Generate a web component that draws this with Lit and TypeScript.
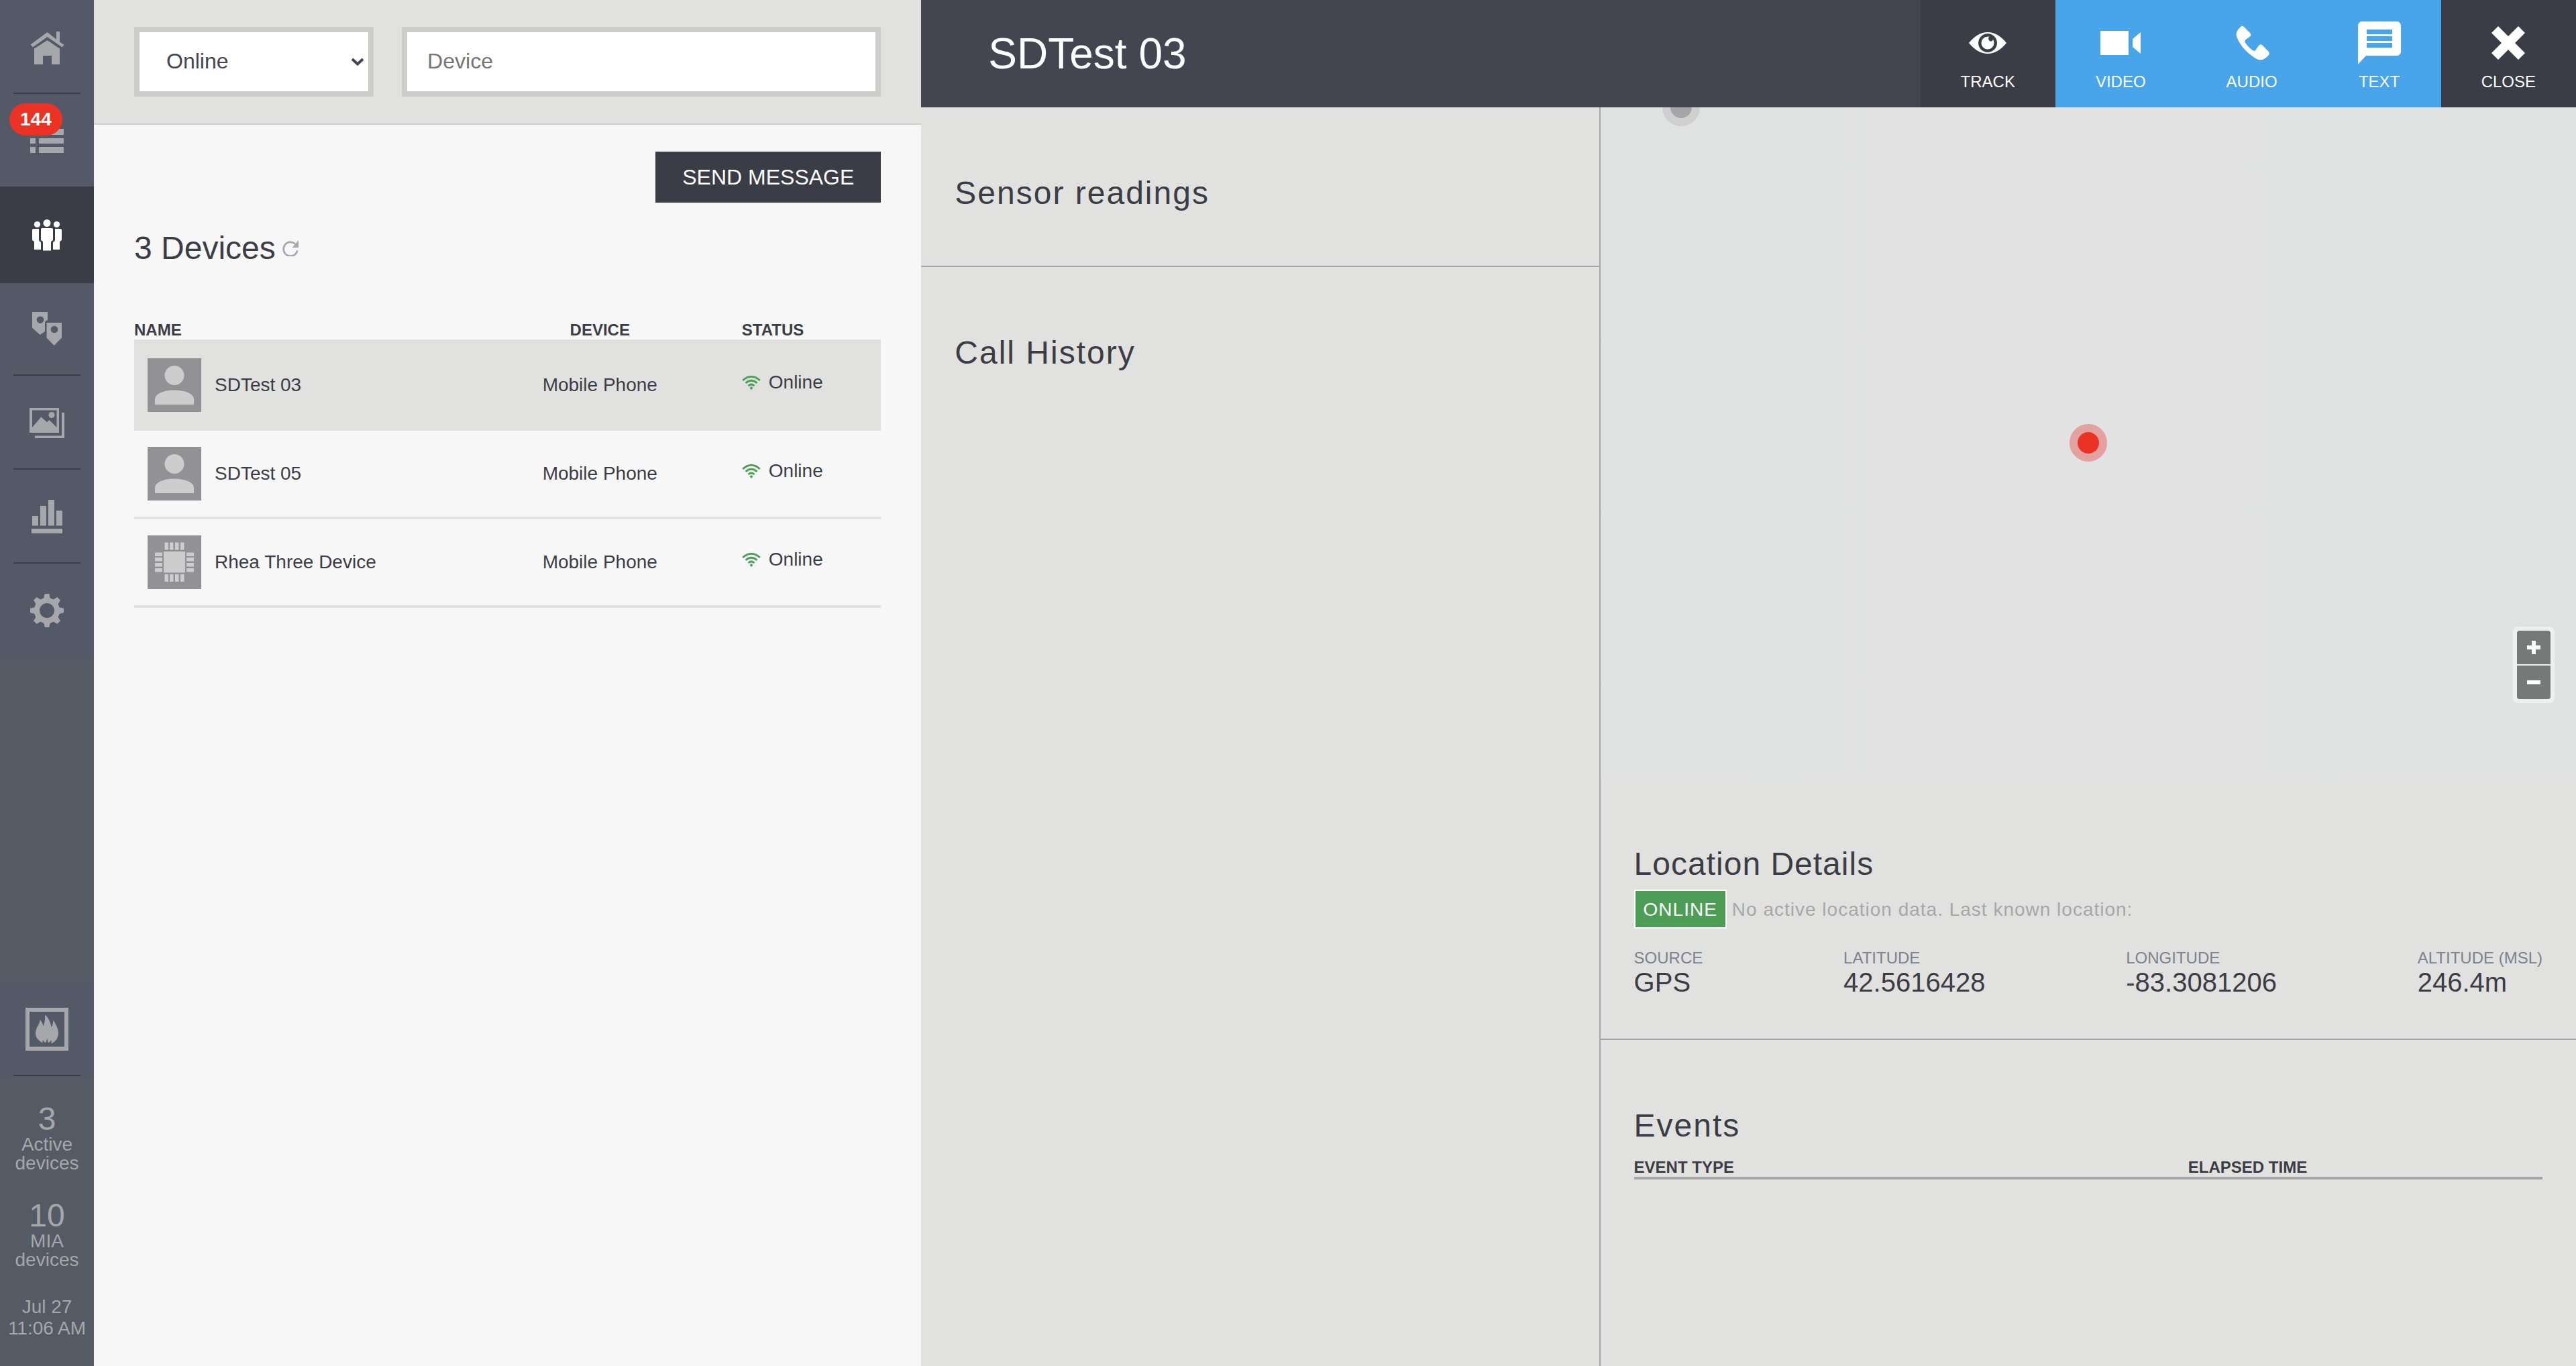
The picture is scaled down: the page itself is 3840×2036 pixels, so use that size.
import { LitElement, html, css, svg } from "lit";
import { customElement, state } from "lit/decorators.js";
import { classMap } from "lit/directives/class-map.js";

interface Device {
  name: string;
  type: string;
  status: string;
  icon: "person" | "chip";
}

const DEVICES: Device[] = [
  { name: "SDTest 03", type: "Mobile Phone", status: "Online", icon: "person" },
  { name: "SDTest 05", type: "Mobile Phone", status: "Online", icon: "person" },
  { name: "Rhea Three Device", type: "Mobile Phone", status: "Online", icon: "chip" },
];

const LOCATION = [
  { label: "SOURCE", value: "GPS" },
  { label: "LATITUDE", value: "42.5616428" },
  { label: "LONGITUDE", value: "-83.3081206" },
  { label: "ALTITUDE (MSL)", value: "246.4m" },
];

const glyphs = {
  home: svg`
    <path d="M32.5 10 46 20.5V9h5v15.500l6.700 4.500-3.200 3.200L32.500 17 11 32.200 7.400 28.500z"/>
    <path d="M32.500 22 51 34.500V58H39V45H26v13H13V34.500z"/>`,
  list: svg`
    <path d="M7 14h8v9H7zM7 28h8v8H7zM7 41h8v9H7z"/>
    <rect x="20" y="14" width="37" height="9" rx="1"/>
    <rect x="20" y="28" width="37" height="8" rx="1"/>
    <rect x="20" y="41" width="37" height="9" rx="1"/>`,
  people: svg`
    <circle cx="32" cy="14.500" r="5.500"/>
    <circle cx="17.500" cy="16.500" r="4.600"/>
    <circle cx="46.500" cy="16.500" r="4.600"/>
    <path d="M25 22h14q2 0 2 2v15q0 2-3 3v13.500H26V42q-3-1-3-3V24q0-2 2-2z"/>
    <path d="M12 23h8v17q0 2 3 3v11H13V42q-3-1-3-3V25q0-2 2-2z"/>
    <path d="M52 23h-8v17q0 2-3 3v11h10V42q3-1 3-3V25q0-2-2-2z"/>`,
  pins: svg`
    <path fill-rule="evenodd" d="M10 7h23v12q-4 1-4 4v13l-7.500 5L10 30.500zM22 13.400a5.300 5.300 0 1 0 .01 0z"/>
    <path fill-rule="evenodd" d="M31.500 23H54v22.500L42.700 57 31.500 45.500zM43 27.700a5.300 5.300 0 1 0 .01 0z"/>`,
  gallery: svg`
    <path fill-rule="evenodd" d="M6 10h44v37H6zM10 13.500V39l13.300-15.500L32 31.300l3.500-3.300L46.500 39V13.500z"/>
    <circle cx="39" cy="20.500" r="4.500"/>
    <path d="M54 17h4v38H14v-3.500h40z"/>`,
  chart: svg`
    <path d="M10 31h9v14.500h-9zM22 16h9v29.500h-9zM34 7h9v38.500h-9zM46 23h9v22.500h-9zM9 50h46v7H9z"/>`,
  gear: svg`
    <circle cx="32" cy="32" r="15" fill="none" stroke="currentColor" stroke-width="8"/>
    ${[0, 45, 90, 135, 180, 225, 270, 315].map(
      (a) => svg`<path transform="rotate(${a} 32 32)" d="M28.700 7h6.600l1.200 5.500q.5 1.500 3 2.500l-1 3h-13l-1-3q2.500-1 3-2.500z"/>`
    )}`,
  fire: svg`
    <path fill-rule="evenodd" d="M0 0h64v64H0zM6 6v52h52V6z"/>
    <path d="M29 10.600Q36 16 38.700 29.300 41.500 24 41.300 18.600 49 30 49 38 49 49 38.300 53.600L39 48.600 34 52.500 32.300 46 30 52.400 25.300 48.300 25.700 52.400Q15 47 15 38.400 15 32 19 26 22 21 21.500 17.500 25 21 26.300 27.400 30 20 29 10.600z"/>`,
  eye: svg`
    <path fill-rule="evenodd" d="M4 32Q17 16 32 16T60 32Q47 48 32 48T4 32zM32 18a14 14 0 1 0 .01 0z"/>
    <path d="M32 22.500q1.800 0 2.500.3-2 1.500-1 4.500 1.500 3 4.500 2 1.800-.7 2-2.500 1.500 2.500 1.500 5.200a9.500 9.500 0 1 1-9.500-9.500z"/>`,
  video: svg`<path d="M2 14h42v36H2zM62 16v32L50 38V26z"/>`,
  phone: svg`
    <path d="M14 9Q17.500 5 20.500 8.500L29 17Q31.500 20 29.500 22L22 27.500Q20.500 29.500 22.500 32.500 28 40 34 43.500 36 44.500 37 43L42.500 35.500Q45 33 47.500 35.500L56.500 44.500Q59 47.500 57 50L53 54Q46 59.500 39 56 17 43 9 22.500 7 15 14 9z"/>`,
  text: svg`
    <path fill-rule="evenodd" d="M6 0h52a6 6 0 0 1 6 6v39a6 6 0 0 1-6 6H12L0 64V6a6 6 0 0 1 6-6zM13 12v7h38v-7zM13 22v7h38v-7zM13 32v7h38v-7z"/>`,
  close: svg`
    <path d="M17 7 7 17l15 15L7 47l10 10 15-15 15 15 10-10-15-15 15-15L47 7 32 22z"/>`,
};

type GlyphName = keyof typeof glyphs;

const glyph = (name: GlyphName) => html`
  <svg class="glyph" viewBox="0 0 64 64" fill="currentColor" aria-hidden="true">${glyphs[name]}</svg>
`;

const NAV: { id: GlyphName; label: string; badge?: string }[] = [
  { id: "home", label: "Home" },
  { id: "list", label: "Activity", badge: "144" },
  { id: "people", label: "Devices" },
  { id: "pins", label: "Places" },
  { id: "gallery", label: "Media" },
  { id: "chart", label: "Reports" },
  { id: "gear", label: "Settings" },
];

const ACTIONS: { icon: GlyphName; label: string; blue: boolean }[] = [
  { icon: "eye", label: "TRACK", blue: false },
  { icon: "video", label: "VIDEO", blue: true },
  { icon: "phone", label: "AUDIO", blue: true },
  { icon: "text", label: "TEXT", blue: true },
  { icon: "close", label: "CLOSE", blue: false },
];

const avatars = {
  person: svg`
    <circle cx="40" cy="25.500" r="14.500"/>
    <path d="M11 69v-8q0-6 9-10 9-3.500 20-3.500t20 3.500q9 4 9 10v8z"/>`,
  chip: svg`
    <path d="M24 24h32v31.500H24z"/>
    ${[25.5, 33, 41, 49].map(
      (p) => svg`<rect x=${p} y="10.500" width="5.500" height="11"/><rect x=${p} y="58" width="5.500" height="11"/>
        <rect x="11" y=${p} width="11" height="5.500"/><rect x="58" y=${p} width="11" height="5.500"/>`
    )}`,
};

@customElement("app-root")
export class AppRoot extends LitElement {
  static styles = css`
    :host {
      display: block;
      font-family: "Liberation Sans", Arial, Helvetica, sans-serif;
      font-size: 28px;
      line-height: 28px;
      color: #3b3d46;
      --dark: #3b3d46;
      --panel: #e1e1df;
      --rule: #a5a5ab;
    }
    *,
    *::before,
    *::after {
      box-sizing: border-box;
    }
    h1,
    h2,
    p,
    dl,
    dd {
      margin: 0;
      font-weight: 400;
    }
    a {
      color: inherit;
      text-decoration: none;
    }
    button,
    input,
    select {
      font: inherit;
      color: inherit;
      border: 0;
      border-radius: 0;
      margin: 0;
      padding: 0;
      background: none;
    }
    .app {
      display: grid;
      grid-template-columns: 140px minmax(0, 1fr) minmax(0, 2fr);
      min-height: 100vh;
    }
    .glyph {
      display: block;
      width: 64px;
      height: 64px;
    }

    /* sidebar */
    .sidebar {
      display: flex;
      flex-direction: column;
      justify-content: space-between;
      background: #545b64;
      color: #a6a7aa;
    }
    .nav-item {
      position: relative;
      display: flex;
      align-items: center;
      justify-content: center;
      height: 140px;
      background: #535967;
    }
    .nav-item.ruled::after {
      content: "";
      position: absolute;
      bottom: 0;
      left: 20px;
      right: 20px;
      height: 2px;
      background: var(--dark);
    }
    .nav-item.active {
      z-index: 1;
      background: var(--dark);
      color: #fff;
      box-shadow: 0 -2px 0 var(--dark), 0 2px 0 var(--dark);
    }
    .badge {
      position: absolute;
      top: 14px;
      left: 14px;
      padding: 10px 16px;
      border-radius: 24px;
      background: #ea3324;
      color: #fff;
      font-weight: 700;
    }
    .stats {
      display: flex;
      flex-direction: column;
      gap: 40px;
      padding: 40px 0;
      text-align: center;
    }
    .count {
      display: block;
      font-size: 48px;
      line-height: 48px;
    }
    .stat-label {
      display: block;
      padding: 0 16px;
    }
    .clock {
      line-height: 32px;
      white-space: nowrap;
    }

    /* device list */
    .devices {
      background: #f7f7f7;
    }
    .filters {
      display: grid;
      grid-template-columns: minmax(0, 1fr) minmax(0, 2fr);
      gap: 42px;
      padding: 40px 60px;
      background: var(--panel);
      border-bottom: 2px solid #cdcdcb;
    }
    .field {
      width: 100%;
      height: 104px;
      padding: 0 30px 2px;
      border: 8px solid #cdcdcb;
      background: #fff;
      font-size: 32px;
    }
    .picker {
      display: grid;
      align-items: center;
    }
    .picker .field {
      grid-area: 1 / 1;
      padding-left: 40px;
      appearance: none;
      color: #434651;
    }
    .caret {
      grid-area: 1 / 1;
      justify-self: end;
      width: 20px;
      height: 12px;
      margin-right: 14px;
      pointer-events: none;
    }
    .field::placeholder {
      color: #757575;
      opacity: 1;
    }
    .list {
      display: flex;
      flex-direction: column;
      padding: 40px 60px;
    }
    .send {
      align-self: flex-end;
      padding: 20px 40px;
      background: var(--dark);
      color: #fff;
      font-size: 32px;
      line-height: 36px;
    }
    .list-head {
      display: flex;
      align-items: center;
      gap: 10px;
      margin-top: 40px;
    }
    .title {
      font-size: 48px;
      line-height: 56px;
    }
    .refresh,
    .refresh svg {
      display: block;
      width: 24px;
      height: 24px;
      color: #a6a7aa;
    }
    table {
      width: 100%;
      border-collapse: separate;
      border-spacing: 0;
      table-layout: fixed;
      text-align: left;
    }
    th {
      padding: 0;
      font-size: 24px;
      line-height: 28px;
      font-weight: 700;
      border-bottom: 4px solid var(--panel);
    }
    td {
      padding: 0;
      height: 132px;
      border-bottom: 4px solid var(--panel);
    }
    .device-table {
      margin-top: 80px;
    }
    .col-name {
      width: 43%;
    }
    .col-device {
      width: 38%;
      padding-left: 8px;
      text-align: center;
    }
    .col-status {
      padding-left: 4px;
    }
    .selected td {
      background: var(--panel);
    }
    .who {
      display: flex;
      align-items: center;
      gap: 20px;
      padding-left: 20px;
    }
    .avatar {
      display: block;
      width: 80px;
      height: 80px;
      background: #919196;
      fill: #cdcdcd;
    }
    .online {
      display: flex;
      align-items: center;
      gap: 12px;
      padding-bottom: 8px;
    }
    .wifi {
      width: 28px;
      height: 22px;
      color: #4e9d57;
    }

    /* detail */
    .detail {
      display: flex;
      flex-direction: column;
      background: var(--panel);
    }
    .topbar {
      display: flex;
      justify-content: space-between;
      align-items: stretch;
      min-height: 160px;
      background: #434651;
      color: #fff;
    }
    .device-title {
      align-self: center;
      padding: 0 100px;
      font-size: 64px;
      line-height: 72px;
    }
    .actions {
      display: flex;
    }
    .action {
      display: flex;
      flex-direction: column;
      align-items: center;
      gap: 12px;
      padding: 32px 60px 0;
      background: var(--dark);
      color: #fff;
      font-size: 24px;
      line-height: 28px;
    }
    .action.blue {
      background: #48a5ea;
    }
    .columns {
      flex: 1;
      display: grid;
      grid-template-columns: minmax(0, 1010fr) minmax(0, 1456fr);
    }
    .column + .column {
      border-left: 2px solid var(--rule);
    }
    .section {
      padding: 100px 50px 80px;
    }
    .section + .section {
      border-top: 2px solid var(--rule);
    }
    .section .title {
      letter-spacing: 2px;
    }
    .map {
      position: relative;
      height: 1000px;
      overflow: hidden;
      background: linear-gradient(90deg, #e0e2e1, #e2e2e2 45%, #e0e3e1);
    }
    .marker {
      position: absolute;
      width: 56px;
      height: 56px;
      margin: -28px 0 0 -28px;
      border: 12px solid #e3a1a0;
      border-radius: 50%;
      background: #ea3324;
    }
    .marker.here {
      left: 50%;
      top: 50%;
    }
    .marker.old {
      left: 120px;
      top: 0;
      border-color: #cfcfcf;
      background: #a5a5aa;
    }
    .zoom {
      position: absolute;
      right: 32px;
      bottom: 112px;
      display: flex;
      flex-direction: column;
      gap: 2px;
      padding: 6px;
      border-radius: 8px;
      background: #eff0f0;
    }
    .zoom button {
      display: flex;
      align-items: center;
      justify-content: center;
      width: 50px;
      height: 50px;
      border-radius: 4px 4px 0 0;
      background: #777978;
      color: #fff;
    }
    .zoom button + button {
      border-radius: 0 0 4px 4px;
    }
    .zoom svg {
      width: 20px;
      height: 20px;
    }
    .location {
      padding-bottom: 62px;
    }
    .section.location .title,
    .presence {
      letter-spacing: 1px;
    }
    .presence {
      display: flex;
      align-items: baseline;
      gap: 8px;
      margin-top: 10px;
      color: #a6a7aa;
    }
    .presence strong {
      padding: 14px 12px 12px;
      border: 2px solid #fff;
      background: #4e9d57;
      color: #fff;
      font-weight: 400;
    }
    .facts {
      display: flex;
      justify-content: space-between;
      margin-top: 30px;
    }
    .facts dt {
      color: #7a8290;
      font-size: 24px;
      line-height: 28px;
    }
    .facts dd {
      font-size: 40px;
      line-height: 44px;
    }
    .events-table {
      margin-top: 20px;
    }
    .events-table th {
      border-color: #a6a6a9;
    }
    .col-event {
      width: 61%;
    }
  `;

  @state() private page: GlyphName = "people";
  @state() private current = 0;

  private renderNav() {
    return html`
      <nav class="sidebar" aria-label="Main">
        <div>
          ${NAV.map(
            (item) => html`
              <a
                href="#${item.id}"
                aria-label=${item.label}
                class="nav-item ${classMap({
                  active: item.id === this.page,
                  ruled: item.id !== "gear",
                })}"
                @click=${() => (this.page = item.id)}
              >
                ${glyph(item.id)}
                ${item.badge ? html`<span class="badge">${item.badge}</span>` : null}
              </a>
            `
          )}
        </div>
        <div>
          <a href="#fire" class="nav-item ruled" aria-label="Incidents">${glyph("fire")}</a>
          <div class="stats">
            <p><span class="count">3</span><span class="stat-label">Active devices</span></p>
            <p><span class="count">10</span><span class="stat-label">MIA devices</span></p>
            <p class="clock">Jul 27<br />11:06 AM</p>
          </div>
        </div>
      </nav>
    `;
  }

  private renderDevices() {
    return html`
      <section class="devices">
        <form class="filters">
          <div class="picker">
            <select class="field" aria-label="Status">
              <option>Online</option>
              <option>Offline</option>
            </select>
            <svg class="caret" viewBox="0 0 20 12" fill="none" stroke="#434651" stroke-width="4" aria-hidden="true">
              <path d="M2 2l8 7.500L18 2" />
            </svg>
          </div>
          <input class="field" type="text" placeholder="Device" aria-label="Device" />
        </form>
        <div class="list">
          <button class="send" type="button">SEND MESSAGE</button>
          <div class="list-head">
            <h1 class="title">3 Devices</h1>
            <button class="refresh" type="button" aria-label="Refresh">
              <svg viewBox="0 0 24 24" aria-hidden="true">
                <path d="M19 5.500A10.400 10.400 0 1 0 22.200 15.500" fill="none" stroke="currentColor" stroke-width="2.800" />
                <path d="M24 0v11H14.500z" fill="currentColor" />
              </svg>
            </button>
          </div>
          <table class="device-table">
            <thead>
              <tr>
                <th class="col-name" scope="col">NAME</th>
                <th class="col-device" scope="col">DEVICE</th>
                <th class="col-status" scope="col">STATUS</th>
              </tr>
            </thead>
            <tbody>
              ${DEVICES.map(
                (d, i) => html`
                  <tr class=${classMap({ selected: i === this.current })} @click=${() => (this.current = i)}>
                    <td>
                      <div class="who">
                        <svg class="avatar" viewBox="0 0 80 80" aria-hidden="true">${avatars[d.icon]}</svg>
                        ${d.name}
                      </div>
                    </td>
                    <td class="col-device">${d.type}</td>
                    <td class="col-status">
                      <div class="online">
                        <svg class="wifi" viewBox="0 0 28 22" fill="none" stroke="currentColor" stroke-width="2.800" aria-hidden="true">
                          <path d="M1.200 8Q14-3.500 26.800 8M5.500 12Q14 4.500 22.500 12M9.500 16Q14 12 18.500 16" />
                          <path d="M14 17l2.500 2.200L14 22l-2.500-2.800z" fill="currentColor" stroke="none" />
                        </svg>
                        ${d.status}
                      </div>
                    </td>
                  </tr>
                `
              )}
            </tbody>
          </table>
        </div>
      </section>
    `;
  }

  private renderDetail() {
    return html`
      <section class="detail">
        <header class="topbar">
          <h2 class="device-title">${DEVICES[this.current].name}</h2>
          <div class="actions">
            ${ACTIONS.map(
              (a) => html`
                <button type="button" class="action ${classMap({ blue: a.blue })}">
                  ${glyph(a.icon)}<span>${a.label}</span>
                </button>
              `
            )}
          </div>
        </header>
        <div class="columns">
          <div class="column">
            <div class="section"><h2 class="title">Sensor readings</h2></div>
            <div class="section"><h2 class="title">Call History</h2></div>
          </div>
          <div class="column">
            <div class="map">
              <span class="marker old"></span>
              <span class="marker here"></span>
              <div class="zoom">
                <button type="button" aria-label="Zoom in">
                  <svg viewBox="0 0 20 20" fill="currentColor" aria-hidden="true">
                    <path d="M7 0h6v7h7v6h-7v7H7v-7H0V7h7z" />
                  </svg>
                </button>
                <button type="button" aria-label="Zoom out">
                  <svg viewBox="0 0 20 20" fill="currentColor" aria-hidden="true"><path d="M0 7h20v6H0z" /></svg>
                </button>
              </div>
            </div>
            <div class="section location">
              <h2 class="title">Location Details</h2>
              <p class="presence">
                <strong>ONLINE</strong>
                <span>No active location data. Last known location:</span>
              </p>
              <dl class="facts">
                ${LOCATION.map((f) => html`<div><dt>${f.label}</dt><dd>${f.value}</dd></div>`)}
              </dl>
            </div>
            <div class="section">
              <h2 class="title">Events</h2>
              <table class="events-table">
                <thead>
                  <tr>
                    <th class="col-event" scope="col">EVENT TYPE</th>
                    <th scope="col">ELAPSED TIME</th>
                  </tr>
                </thead>
              </table>
            </div>
          </div>
        </div>
      </section>
    `;
  }

  render() {
    return html`<div class="app">${this.renderNav()}${this.renderDevices()}${this.renderDetail()}</div>`;
  }
}
